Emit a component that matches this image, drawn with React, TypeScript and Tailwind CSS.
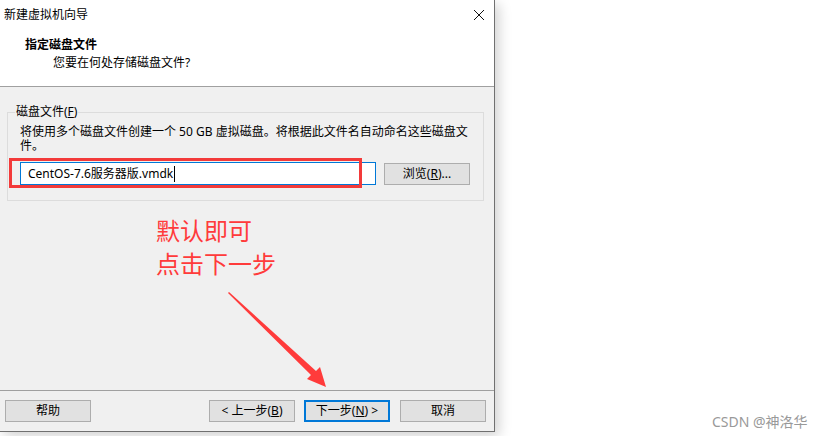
const ui = "font-['Segoe_UI','Noto_Sans','Noto_Sans_CJK_SC',sans-serif]"

function Btn({ label, accel, pre, post, primary }: { label: string; accel?: string; pre?: string; post?: string; primary?: boolean }) {
  return (
    <button
      className={`w-[86px] h-[22px] text-[12px] leading-none text-black flex items-center justify-center ${
        primary ? 'bg-[#e1e1e1] border-2 border-[#0078d7]' : 'bg-[#e1e1e1] border border-[#adadad]'
      }`}
    >
      {pre}
      {label}
      {accel && (
        <>
          (<span className="underline">{accel}</span>)
        </>
      )}
      {post}
    </button>
  )
}

export default function App() {
  return (
    <div className={`relative w-[827px] h-[436px] bg-white overflow-hidden ${ui}`}>
      <div className="w-[495px] h-[432px] flex flex-col bg-[#f0f0f0] border-r border-b border-[#707070] shadow-[4px_4px_12px_rgba(0,0,0,0.18)]">
        {/* title bar */}
        <div className="h-[29px] bg-white flex items-center justify-between pl-[4px] pr-[9px]">
          <span className="text-[12px] text-black">新建虚拟机向导</span>
          <svg width="12" height="12" viewBox="0 0 12 12">
            <path d="M1 1 L11 11 M11 1 L1 11" stroke="#111" strokeWidth="1" />
          </svg>
        </div>
        {/* header */}
        <div className="h-[58px] bg-white border-b border-[#a0a0a0] pl-[25px] pt-[6px]">
          <div className="text-[12px] font-bold text-black leading-[20px]">指定磁盘文件</div>
          <div className="text-[12px] text-black leading-[16px] pl-[28px]">您要在何处存储磁盘文件?</div>
        </div>
        {/* body */}
        <div className="flex-1 px-[7px] pt-[18px]">
          <fieldset className="border border-[#dcdcdc] w-[477px] h-[96px] px-[12px] pb-0 m-0">
            <legend className="text-[12px] text-black px-[1px] -ml-[5px] leading-[14px]">
              磁盘文件(<span className="underline">F</span>)
            </legend>
            <p className="text-[12px] text-black leading-[14px] mt-[6px]">
              将使用多个磁盘文件创建一个 50 GB 虚拟磁盘。将根据此文件名自动命名这些磁盘文件。
            </p>
            <div className="flex items-center gap-[8px] mt-[9px]">
              <div className="w-[356px] h-[23px] bg-white border border-[#0078d7] flex items-center pl-[7px] text-[12px] text-black">
                CentOS-7.6服务器版.vmdk<span className="w-px h-[16px] bg-black ml-px" />
              </div>
              <Btn label="浏览" accel="R" post="..." />
            </div>
          </fieldset>
        </div>
        {/* footer */}
        <div className="h-[41px] border-t border-[#a0a0a0] flex items-start pt-[9px] pl-[5px] pr-[8px]">
          <Btn label="帮助" />
          <div className="flex-1" />
          <Btn pre="< " label="上一步" accel="B" />
          <div className="w-[9px]" />
          <Btn label="下一步" accel="N" post=" >" primary />
          <div className="w-[10px]" />
          <Btn label="取消" />
        </div>
      </div>

      {/* annotations */}
      <div className="absolute left-[9px] top-[158px] w-[353px] h-[30px] border-[3px] border-[#f33a3a]" />
      <div className="absolute left-[156px] top-[213px] text-[#ff3b3b] text-[24px] leading-[33px] font-['Noto_Sans_CJK_SC',sans-serif]">
        <div>默认即可</div>
        <div>点击下一步</div>
      </div>
      <svg className="absolute left-0 top-0" width="827" height="436" viewBox="0 0 827 436">
        <polygon points="228,293 229,292 316,371 320,367 326,387 307,379 311,375" fill="#ff3b3b" />
      </svg>

      <div className="absolute left-[712px] top-[411px] text-[14px] text-[#999] font-['Noto_Sans','Noto_Sans_CJK_SC',sans-serif]">
        CSDN @神洛华
      </div>
    </div>
  )
}
